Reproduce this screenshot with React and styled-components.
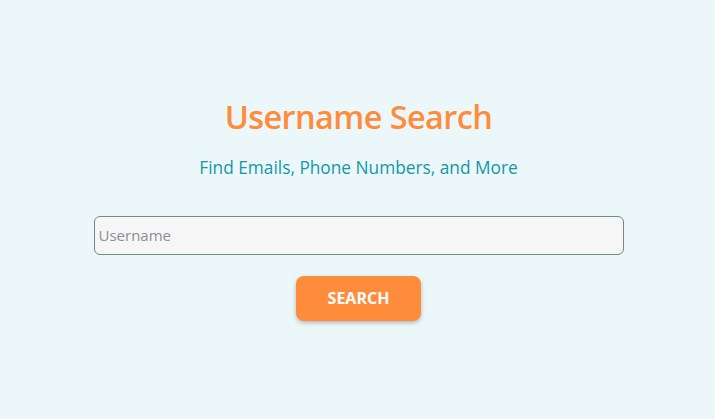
import styled, { createGlobalStyle } from "styled-components";

const GlobalStyle = createGlobalStyle`
  body {
    margin: 0;
    background: #ebf7f9;
    font-family: "Open Sans", "Noto Sans", sans-serif;
  }
`;

const Page = styled.div`
  min-height: 100vh;
  display: flex;
  flex-direction: column;
  align-items: center;
  justify-content: center;
  padding: 0 0 5px 2px;
  box-sizing: border-box;
`;

const Title = styled.h1`
  margin: 0;
  color: #ff8c3b;
  font-size: 32.5px;
  font-weight: 600;
  letter-spacing: -0.6px;
`;

const Subtitle = styled.p`
  margin: 17px 0 0;
  color: #1497a8;
  font-size: 17.3px;
`;

const Form = styled.form`
  display: flex;
  flex-direction: column;
  align-items: center;
  width: 530px;
  margin-top: 37px;
  gap: 21px;
`;

const Input = styled.input`
  width: 100%;
  height: 39px;
  box-sizing: border-box;
  padding: 0 4px;
  border: 1px solid #6f8b87;
  border-radius: 6px;
  background: #f5f6f5;
  font-family: inherit;
  font-size: 15px;
  color: #333;

  &::placeholder {
    color: #8a8f99;
  }
`;

const Button = styled.button`
  width: 125px;
  height: 45px;
  border: none;
  border-radius: 8px;
  background: #ff8c3a;
  color: #fff;
  font-family: inherit;
  font-size: 16px;
  font-weight: 700;
  box-shadow: 0 2px 4px rgba(0, 0, 0, 0.25);
  cursor: pointer;
`;

export default function App() {
  return (
    <>
      <GlobalStyle />
      <Page>
        <Title>Username Search</Title>
        <Subtitle>Find Emails, Phone Numbers, and More</Subtitle>
        <Form onSubmit={(e) => e.preventDefault()}>
          <Input placeholder="Username" />
          <Button type="submit">SEARCH</Button>
        </Form>
      </Page>
    </>
  );
}
